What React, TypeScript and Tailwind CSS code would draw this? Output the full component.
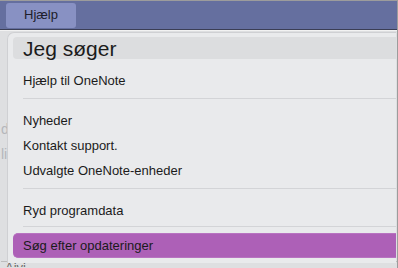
export default function App() {
  const font = { fontFamily: '"Liberation Sans", Arial, sans-serif' }

  return (
    <div
      className="relative w-[398px] h-[268px] overflow-hidden bg-[#dedfe1] border-t border-r border-[#9c9c9c] text-[#1b1b1b]"
      style={font}
    >
      <div className="h-[29px] bg-[#656f9f] border-b border-[#3b3e55] flex items-center pl-[6px]">
        <div className="h-[25px] px-[18px] flex items-center rounded-[3px] bg-[#8891c3] text-[13px] text-[#1d1d2a]">
          Hjælp
        </div>
      </div>

      <div className="h-[237px] flex flex-col pl-[1px] border-t border-[#f2f2f2] text-[14px] text-[#b4b6bb]">
        <div className="h-[86px]" />
        <div className="h-[25px] leading-[25px]">d</div>
        <div className="h-[25px] leading-[25px]">li</div>
        <div className="flex-1" />
        <div className="h-[6px] overflow-hidden pl-[4px] leading-[11px] text-[13px] text-[#6a6a6a] border-t border-[#bdbdbd]">Aivi</div>
      </div>

      <div className="absolute left-[7px] top-[31px] right-[1px] h-[231px] bg-[#e9eaec] rounded-tl-[7px] border-l border-t border-[#cfd0d3] flex flex-col pt-[4px] text-[13px] text-[#1b1b1b]">
        <div className="ml-[5px] h-[22px] rounded-l-[4px] bg-[#dcdddf] pl-[10px] flex items-center text-[21px] leading-none">
          Jeg søger
        </div>
        <div className="h-[9px]" />
        <div className="h-[25px] pl-[15px] flex items-center">Hjælp til OneNote</div>
        <div className="ml-[15px] mt-[5px] mb-[9px] h-[1px] bg-[#d3d4d7]" />
        <div className="h-[25px] pl-[15px] flex items-center">Nyheder</div>
        <div className="h-[25px] pl-[15px] flex items-center">Kontakt support.</div>
        <div className="h-[25px] pl-[15px] flex items-center">Udvalgte OneNote-enheder</div>
        <div className="ml-[15px] mt-[5px] mb-[9px] h-[1px] bg-[#d3d4d7]" />
        <div className="h-[25px] pl-[15px] flex items-center">Ryd programdata</div>
        <div className="ml-[15px] mt-[3px] mb-[6px] h-[1px] bg-[#d3d4d7]" />
        <div className="ml-[5px] h-[25px] rounded-l-[5px] bg-[#ad60b7] border-y border-[#b873c1] pl-[10px] flex items-center">
          Søg efter opdateringer
        </div>
      </div>
    </div>
  )
}
